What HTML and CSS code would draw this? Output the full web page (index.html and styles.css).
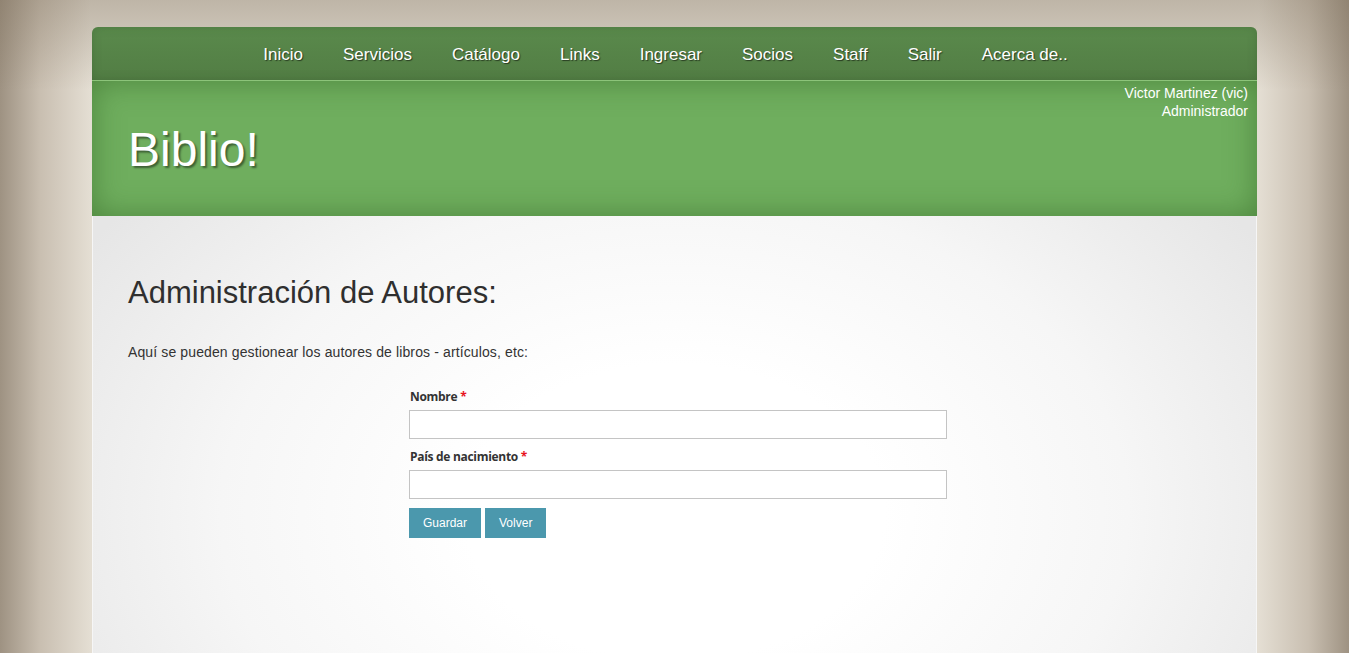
FILE: index.html
```html
<!DOCTYPE html>
<html lang="es">
<head>
<meta charset="utf-8">
<title>Biblio!</title>
<link rel="stylesheet" href="styles.css">
</head>
<body>
<div class="page">
  <nav class="topnav">
    <ul class="menu">
      <li><a href="#">Inicio</a></li>
      <li><a href="#">Servicios</a></li>
      <li><a href="#">Catálogo</a></li>
      <li><a href="#">Links</a></li>
      <li><a href="#">Ingresar</a></li>
      <li><a href="#">Socios</a></li>
      <li><a href="#">Staff</a></li>
      <li><a href="#">Salir</a></li>
      <li><a href="#">Acerca de..</a></li>
    </ul>
  </nav>
  <header class="banner">
    <div class="user">Victor Martinez (vic)<br>Administrador</div>
    <h1 class="brand">Biblio!</h1>
  </header>
  <main class="content">
    <h2 class="title">Administración de Autores:</h2>
    <p class="intro">Aquí se pueden gestionear los autores de libros - artículos, etc:</p>
    <form class="form">
      <label class="label">Nombre <span class="req">*</span></label>
      <input class="field" type="text">
      <label class="label">País de nacimiento <span class="req">*</span></label>
      <input class="field" type="text">
      <div class="actions">
        <button type="button" class="btn">Guardar</button>
        <button type="button" class="btn">Volver</button>
      </div>
    </form>
  </main>
</div>
</body>
</html>
```
FILE: styles.css
```css
html {
  background: #ffffff;
}
body {
  margin: 0 16px 0 0;
  min-height: 800px;
  font-family: "Liberation Sans", Arial, sans-serif;
  background:
    linear-gradient(to bottom, rgba(120,105,85,0.35) 0px, rgba(120,105,85,0) 90px),
    linear-gradient(to right, #9e9282 0%, #c9bfb1 3%, #e4ded3 6.7%, #e4ded3 93.3%, #c9bfb1 97%, #9e9282 100%);
}
.page {
  width: 1165px;
  margin: 0 auto;
  padding-top: 27px;
}
.topnav {
  height: 53px;
  border-radius: 6px 6px 0 0;
  background: linear-gradient(to bottom, #5a8a4c, #527d44);
  box-shadow: inset 0 0 10px rgba(40,70,30,0.25);
  border-bottom: 1px solid #8cc47a;
}
.menu {
  list-style: none;
  margin: 0;
  padding: 2px 18px 0 0;
  box-sizing: border-box;
  height: 53px;
  display: flex;
  justify-content: center;
  align-items: center;
}
.menu a {
  display: block;
  padding: 0 20px;
  color: #ffffff;
  text-decoration: none;
  font-size: 17px;
  text-shadow: 1px 1px 1px rgba(0,0,0,0.55);
}
.banner {
  height: 135px;
  padding: 0 9px 0 36px;
  background: #6fae5e;
  box-shadow: inset 0 0 30px rgba(50,100,35,0.55);
  display: flex;
  flex-direction: column;
}
.user {
  align-self: flex-end;
  text-align: right;
  color: #ffffff;
  font-size: 14px;
  line-height: 18px;
  padding-top: 3px;
}
.brand {
  margin: 2px 0 0;
  font-weight: normal;
  font-size: 48px;
  line-height: 56px;
  color: #ffffff;
  text-shadow: 2px 2px 2px rgba(0,0,0,0.45);
}
.content {
  min-height: 560px;
  border-left: 1px solid #f6f6f6;
  border-right: 1px solid #f6f6f6;
  padding: 59px 35px 40px;
  background: radial-gradient(ellipse 60% 75% at 50% 45%, #ffffff 30%, #f6f6f6 65%, #e6e6e6 100%);
}
.title {
  margin: 0;
  font-weight: normal;
  font-size: 31px;
  line-height: 36px;
  color: #2f2f2f;
}
.intro {
  margin: 31px 0 0;
  font-size: 14px;
  letter-spacing: 0.12px;
  line-height: 20px;
  color: #333333;
}
.form {
  width: 538px;
  margin: 27px 0 0 281px;
  display: flex;
  flex-direction: column;
}
.label {
  font-family: "Open Sans", sans-serif;
  font-weight: bold;
  font-size: 12px;
  letter-spacing: -0.3px;
  line-height: 16px;
  color: #333333;
  padding-left: 1px;
  margin-bottom: 5px;
}
.req {
  color: #e8141e;
}
.field {
  box-sizing: border-box;
  height: 29px;
  margin: 0 0 10px;
  border: 1px solid #c4c4c4;
  background: #ffffff;
}
.actions {
  display: flex;
  gap: 4px;
  margin-top: -1px;
}
.btn {
  height: 30px;
  padding: 0 14px;
  border: none;
  background: #4b98ad;
  color: #ffffff;
  font-family: "Liberation Sans", Arial, sans-serif;
  font-size: 12px;
}
```
